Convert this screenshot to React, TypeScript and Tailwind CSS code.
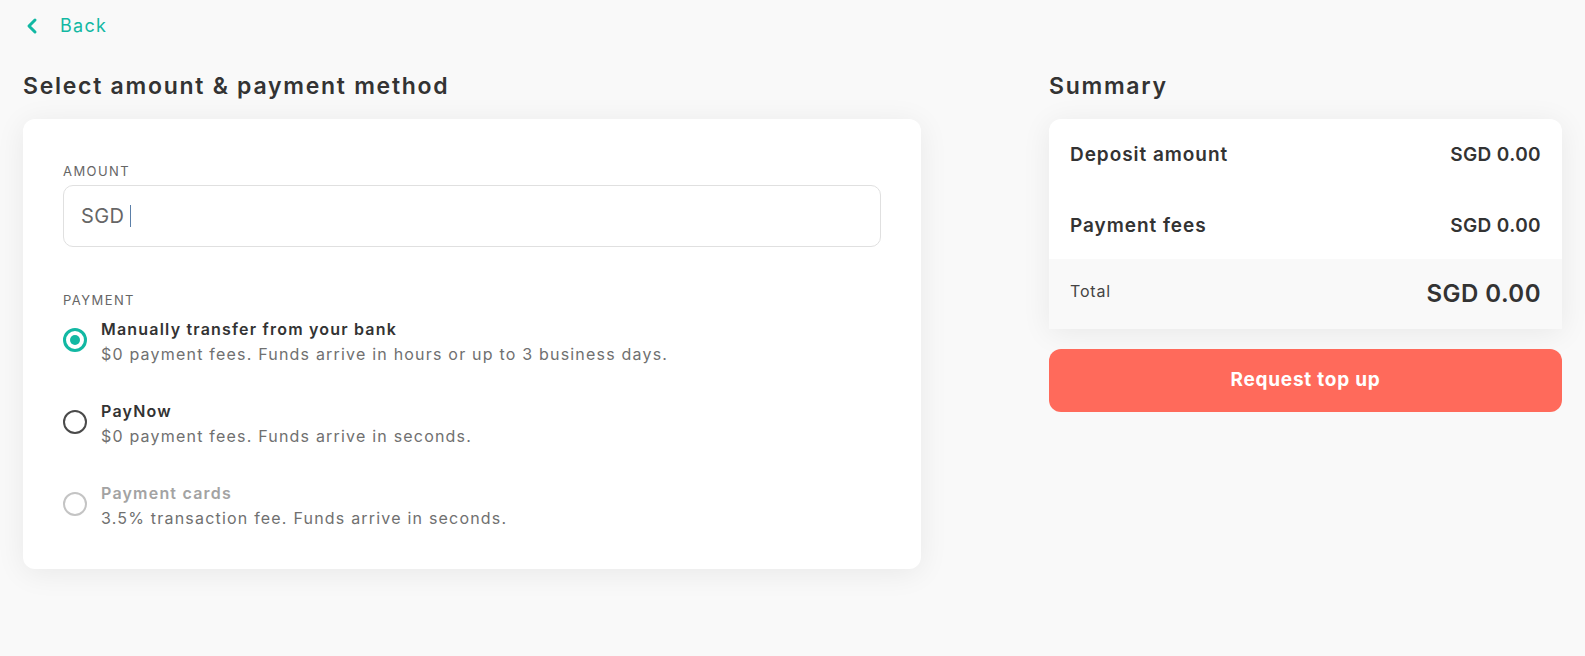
import { ChevronLeft } from 'lucide-react';

type Option = {
  id: string;
  title: string;
  detail: string;
  disabled?: boolean;
};

const options: Option[] = [
  {
    id: 'bank',
    title: 'Manually transfer from your bank',
    detail: '$0 payment fees. Funds arrive in hours or up to 3 business days.',
  },
  {
    id: 'paynow',
    title: 'PayNow',
    detail: '$0 payment fees. Funds arrive in seconds.',
  },
  {
    id: 'card',
    title: 'Payment cards',
    detail: '3.5% transaction fee. Funds arrive in seconds.',
    disabled: true,
  },
];

function Radio({ checked, disabled }: { checked: boolean; disabled?: boolean }) {
  if (checked) {
    return (
      <span className="mt-[11px] flex h-6 w-6 shrink-0 items-center justify-center rounded-full border-[3px] border-[#12b8a3]">
        <span className="h-[10px] w-[10px] rounded-full bg-[#12b8a3]" />
      </span>
    );
  }
  return (
    <span
      className={`mt-[11px] h-6 w-6 shrink-0 rounded-full border-2 ${
        disabled ? 'border-[#c4c4c4]' : 'border-[#4a4a4a]'
      }`}
    />
  );
}

export default function App() {
  const selected = 'bank';

  return (
    <div className="min-h-screen bg-[#f9f9f9] px-[23px] pt-[12px] pb-10 text-[#333] font-['Inter',sans-serif]">
      <button className="-ml-[3px] flex items-center gap-[16px] text-[18px] tracking-[0.07em] text-[#12b8a3]">
        <ChevronLeft size={24} strokeWidth={3} />
        <span>Back</span>
      </button>

      <div className="mt-[32px] grid grid-cols-12">
        <div className="col-span-7">
          <h2 className="text-[23px] font-semibold leading-[30px] tracking-[0.075em]">Select amount &amp; payment method</h2>

          <div className="mt-[18px] rounded-xl bg-white px-10 pt-[43px] pb-[38px] shadow-[0_4px_30px_rgba(0,0,0,0.07)]">
            <label className="block text-[13px] uppercase leading-[18px] tracking-[0.11em] text-[#666]">Amount</label>
            <div className="mt-[5px] flex h-[62px] items-center rounded-[10px] border border-[#e0e0e0] px-[17px] text-[20px] tracking-[0.02em] text-[#666]">
              <span>SGD</span>
              <span className="ml-[6px] h-[22px] w-px bg-[#5b7fa8]" />
            </div>

            <div className="mt-[44px] text-[13px] uppercase leading-[18px] tracking-[0.11em] text-[#666]">Payment</div>

            <div className="mt-[8px] flex flex-col gap-[32px]">
              {options.map((o) => (
                <div key={o.id} className="flex gap-[14px]">
                  <Radio checked={o.id === selected} disabled={o.disabled} />
                  <div>
                    <div
                      className={`text-[16px] font-semibold leading-[25px] tracking-[0.075em] ${
                        o.disabled ? 'text-[#a3a3a3]' : 'text-[#333]'
                      }`}
                    >
                      {o.title}
                    </div>
                    <div className="text-[16px] leading-[25px] tracking-[0.075em] text-[#707070]">{o.detail}</div>
                  </div>
                </div>
              ))}
            </div>
          </div>
        </div>

        <div className="col-span-4 col-start-9">
          <h2 className="text-[23px] font-semibold leading-[30px] tracking-[0.075em]">Summary</h2>

          <div className="mt-[18px] overflow-hidden rounded-t-xl bg-white shadow-[0_4px_30px_rgba(0,0,0,0.07)]">
            <div className="flex h-[70px] items-center justify-between px-[21px] pt-[3px] text-[19px] font-semibold">
              <span className="tracking-[0.05em]">Deposit amount</span>
              <span className="tracking-[0.02em]">SGD 0.00</span>
            </div>
            <div className="flex h-[70px] items-center justify-between px-[21px] pt-[4px] text-[19px] font-semibold">
              <span className="tracking-[0.05em]">Payment fees</span>
              <span className="tracking-[0.02em]">SGD 0.00</span>
            </div>
            <div className="flex h-[70px] items-center justify-between bg-[#f9f9f9] px-[21px]">
              <span className="text-[16px] tracking-[0.05em] text-[#444] -mt-[6px]">Total</span>
              <span className="text-[24px] font-semibold tracking-[0.02em]">SGD 0.00</span>
            </div>
          </div>

          <button className="mt-[20px] flex h-[63px] w-full items-center justify-center rounded-xl bg-[#ff6a5b] text-[19px] font-bold tracking-[0.04em] text-white">
            Request top up
          </button>
        </div>
      </div>
    </div>
  );
}
